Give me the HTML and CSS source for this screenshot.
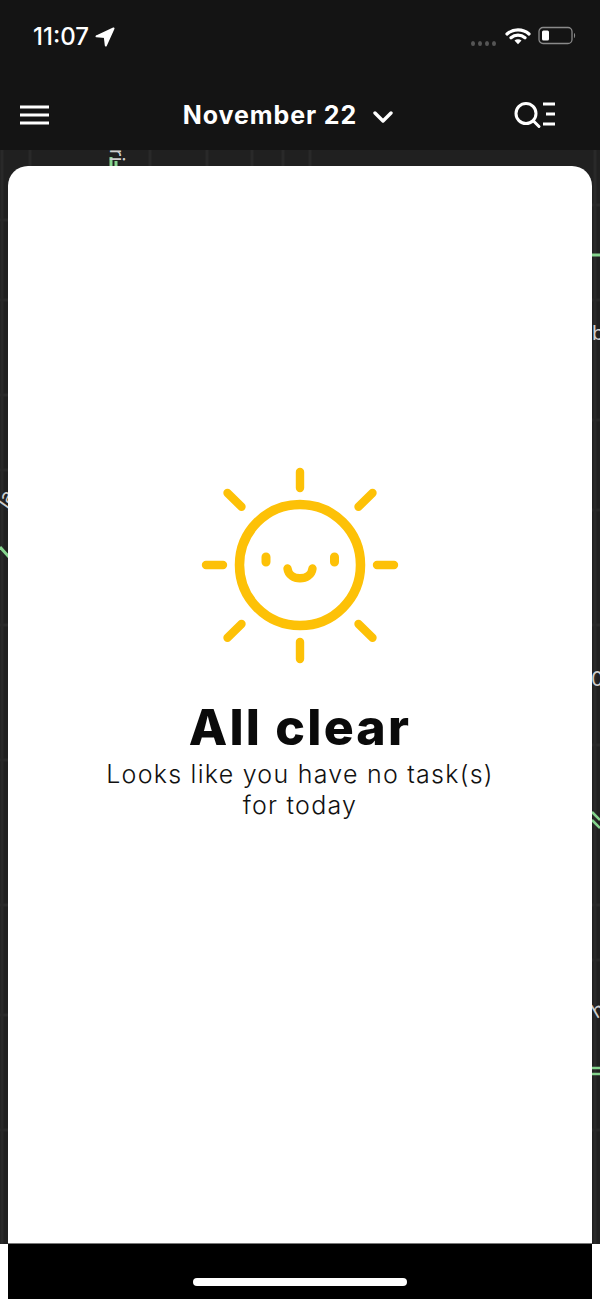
FILE: index.html
```html
<!DOCTYPE html>
<html>
<head>
<meta charset="utf-8" />
<title>Tasks</title>
<link rel="stylesheet" href="styles.css">
</head>
<body>
<div class="phone">
  <div class="top">
    <div class="status">
      <div class="status-left">
        <span class="time">11:07</span>
        <svg class="loc" width="20" height="20" viewBox="0 0 20 20"><path d="M18.500 1.500 1.500 9.300l8.300.8 1 8.400z" fill="#fff" stroke="#fff" stroke-width="2" stroke-linejoin="round"/></svg>
      </div>
      <div class="status-right">
        <div class="dots"><i></i><i></i><i></i><i></i></div>
        <svg class="wifi" width="26" height="18" viewBox="0 0 26 18">
          <path d="M2 7C8 1.500 18 1.500 24 7M6 10.800c4-3.500 10-3.500 14 0" fill="none" stroke="#fff" stroke-width="3.200" stroke-linecap="round"/>
          <path d="M9.500 13.400c2-1.600 5-1.600 7 0L13 17.300z" fill="#fff"/>
        </svg>
        <svg class="batt" width="38" height="20" viewBox="0 0 38 20">
          <rect x="1" y="1.500" width="33" height="16" rx="4" fill="none" stroke="#8a8a8a" stroke-width="1.300"/>
          <rect x="4" y="4.500" width="7" height="10" rx="1.500" fill="#fff"/>
          <path d="M36 7c1.500.4 1.500 4.600 0 5z" fill="#8a8a8a"/>
        </svg>
      </div>
    </div>
    <div class="nav">
      <svg width="30" height="20" viewBox="0 0 30 20"><path d="M0 2h29M0 10h29M0 18h29" stroke="#fff" stroke-width="3"/></svg>
      <div class="month">
        <span>November 22</span>
        <svg width="20" height="12" viewBox="0 0 20 12"><path d="M2 2l8 8 8-8" fill="none" stroke="#fff" stroke-width="3.400" stroke-linecap="round" stroke-linejoin="round"/></svg>
      </div>
      <svg class="search" width="42" height="28" viewBox="0 0 42 28">
        <circle cx="12" cy="12.500" r="10" fill="none" stroke="#fff" stroke-width="3"/>
        <path d="M19.500 20l5.500 5.500" stroke="#fff" stroke-width="3" stroke-linecap="round"/>
        <path d="M29 3h12M32 13h9M29 23h12" stroke="#fff" stroke-width="3"/>
      </svg>
    </div>
  </div>

  <div class="map">
    <!-- dark map tiles behind the card -->
    <svg class="map-bg" viewBox="0 150 600 1094" preserveAspectRatio="none">
      <g stroke="#292929" stroke-width="3" fill="none">
        <path d="M2 150v1094M30 150v16M150 150v16M207 150v16M252 150v16M283 150v16M310 150v16M595 150v1094"/>
        <path d="M0 220h8M0 300h8M0 395h8M0 470h8M0 625h8M0 760h8M0 905h8M0 1015h8M0 1130h8"/>
        <path d="M592 205h8M592 300h8M592 420h8M592 510h8M592 625h8M592 745h8M592 905h8M592 960h8M592 1130h8"/>
      </g>
      <g stroke="#86d48e" fill="none">
        <path d="M0 547l9 10" stroke-width="3"/>
        <path d="M592 255h8" stroke-width="3"/>
        <path d="M592 812l8 8M592 820l8 8" stroke-width="2.500"/>
        <path d="M592 1068h8M592 1074h8" stroke-width="2.500"/>
        <path d="M111 166v-9M116 166v-5" stroke-width="3"/>
      </g>
      <g class="map-label">
        <text x="-2" y="507" transform="rotate(-55 4 500)">ja</text>
        <text x="592" y="340">b</text>
        <text x="591" y="686">0</text>
        <text x="592" y="1018" transform="rotate(-30 596 1010)">h</text>
        <text x="109" y="158" transform="rotate(90 114 154)">ri</text>
      </g>
    </svg>

    <div class="card">
      <svg class="sun" width="200" height="200" viewBox="200 465 200 200">
        <g fill="none" stroke="#fdc107" stroke-width="8.400" stroke-linecap="round">
          <circle cx="300" cy="565" r="60.500" stroke-width="9.500"/>
          <path d="M300 472v16M300 642v17M206 565h17M377 565h17"/>
          <path d="M227.500 493l14 13.700M372.500 493l-14 13.700M227.500 637.700l14-13.700M372.500 637.700l-14-13.700"/>
          <path d="M266 557v5M334.500 557v5" stroke-width="9"/>
          <path d="M287.500 568.500c1.500 13 23.500 13 25 0"/>
        </g>
      </svg>
      <h1>All clear</h1>
      <p>Looks like you have no task(s)<br />for today</p>
    </div>
  </div>

  <div class="bottom"><div class="home"></div></div>
</div>
</body>
</html>
```

FILE: styles.css
```css
*{padding:0;margin:0;box-sizing:border-box;}
body{background:#fff;font-family:"Inter","Liberation Sans",sans-serif;}
.phone{width:600px;height:1299px;display:flex;flex-direction:column;overflow:hidden;}

.top{height:150px;background:#141414;color:#fff;padding:0 44px 0 20px;flex:none;}
.status{height:94px;padding:24px 0 0 13px;display:flex;justify-content:space-between;align-items:flex-start;}
.status-left{display:flex;align-items:center;gap:6px;}
.time{font-size:24px;font-weight:500;line-height:26px;}
.status-right{display:flex;align-items:flex-start;margin-right:-20px;padding-top:3px;}
.dots{display:flex;gap:3px;margin-top:14px;margin-right:9px;}
.dots i{width:4px;height:5px;border-radius:50%;background:#555;}
.wifi{margin-right:7px;}
.batt{margin-top:-1px;}

.nav{display:flex;align-items:center;justify-content:space-between;height:44px;margin-top:-1px;}
.month{display:flex;align-items:center;gap:16px;font-size:25px;font-weight:700;letter-spacing:.9px;margin-left:12px;}
.month svg{margin-top:3px;}
.search{margin-top:-1px;}

.map{flex:1;min-height:0;background:#202020;position:relative;padding:16px 8px 0;display:flex;}
.map-bg{position:absolute;left:0;top:0;width:100%;height:100%;}
.map-label{font-family:"Inter",sans-serif;font-size:20px;fill:#cfcfcf;}

.card{position:relative;flex:1;background:#fff;border-radius:20px 20px 0 0;border-bottom:1px solid #777;display:flex;flex-direction:column;align-items:center;padding-top:299px;}
.sun{display:block;}
h1{font-size:50px;font-weight:800;line-height:60px;letter-spacing:2.200px;color:#0a0a0a;margin-top:32px;}
.card p{font-size:25px;font-weight:300;line-height:31px;letter-spacing:1.250px;color:#111;text-align:center;margin-top:2px;}

.bottom{height:55px;flex:none;background:#000;margin:0 8px;display:flex;justify-content:center;padding-top:34px;}
.home{width:214px;height:8px;border-radius:4px;background:#fff;}
```
